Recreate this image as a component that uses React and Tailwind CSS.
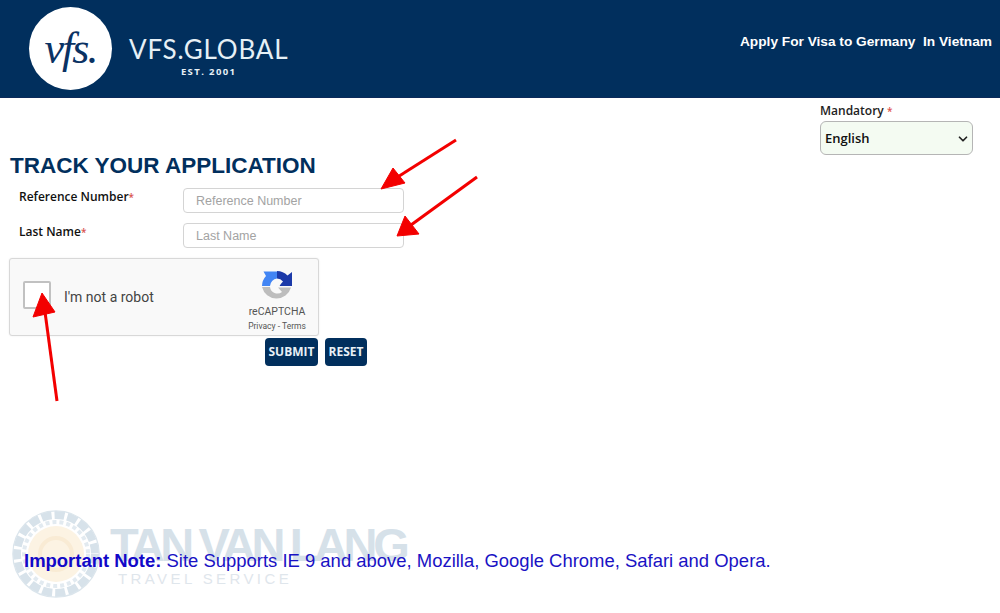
import React from "react";
import { ChevronDown } from "lucide-react";

const NAVY = "#012f5d";

// reCAPTCHA mark, three arrows round a white centre
const RecaptchaIcon = () => (
  <svg width="32" height="33" viewBox="0 0 32 33" className="block">
    <path d="M31 2 V16 H18 L22 11.5 A8.5 8.5 0 0 0 16 8.5 V1 A15 15 0 0 1 26.5 5.5 Z" fill="#1c3aa9" />
    <path d="M1 16 A15 15 0 0 1 5 6 L2.5 1.5 H16 V8.5 A8 8 0 0 0 9 16 Z" fill="#4285f4" />
    <path d="M1 17 H9 A7.5 7.5 0 0 0 21 22 L17 17.5 H30 A15 15 0 0 1 1 17 Z" fill="#bdbdbd" />
    <path d="M12 12 L17 10 L20 13 L18 17 L12 19 L10 15 Z" fill="#f9f9f9" />
  </svg>
);

const Arrows = () => (
  <svg width="1000" height="613" className="absolute left-0 top-0 pointer-events-none">
    <g fill="#f30000" stroke="#f30000">
      <line x1="456" y1="140" x2="396" y2="178" strokeWidth="3" />
      <polygon points="381,189 393,168 405,183" strokeWidth="1" />
      <line x1="477" y1="177" x2="411" y2="225" strokeWidth="3" />
      <polygon points="397,236 405,216 419,234" strokeWidth="1" />
      <line x1="57" y1="401" x2="45" y2="312" strokeWidth="3" />
      <polygon points="42,293 33,317 55,312" strokeWidth="1" />
    </g>
  </svg>
);

// faint agency stamp behind the note
const Watermark = () => (
  <div className="absolute left-[12px] top-[510px] flex items-start pointer-events-none">
    <svg width="88" height="88" viewBox="0 0 88 88" className="block">
      <circle cx="44" cy="44" r="39" fill="none" stroke="#d7e2ea" strokeWidth="8" strokeDasharray="10 3" />
      <circle cx="44" cy="44" r="32" fill="none" stroke="#e2eaf0" strokeWidth="4" strokeDasharray="4 3" />
      <circle cx="44" cy="44" r="43.2" fill="none" stroke="#dbe5ec" strokeWidth="1.2" />
      <circle cx="44" cy="44" r="28" fill="#fcf3e3" />
      <circle cx="44" cy="44" r="16" fill="none" stroke="#f9ebd4" strokeWidth="4" />
    </svg>
    <div className="ml-[10px] font-['Liberation_Sans',sans-serif]">
      <div className="mt-[10px] text-[47px] leading-[50px] font-bold tracking-[-4.4px] text-[#d6e1e9] whitespace-nowrap">
        TAN VAN LANG
      </div>
      <div className="ml-[8px] mt-[1px] text-[15px] leading-[16px] tracking-[3.4px] text-[#dfe6ec] whitespace-nowrap">
        TRAVEL SERVICE
      </div>
    </div>
  </div>
);

const Field = ({ label, placeholder }) => (
  <div className="flex items-start h-[35px]">
    <label className="w-[164px] pt-[1px] text-[12px] leading-[16px] font-semibold text-[#111] font-['Open_Sans',sans-serif]">
      {label}
      <span className="text-[10px] align-top text-[#d9534f]">*</span>
    </label>
    <input
      placeholder={placeholder}
      className="w-[221px] h-[25px] px-[12px] rounded-[4px] border border-[#d4d4d4] bg-white text-[12.5px] font-['Liberation_Sans',sans-serif] placeholder:text-[#a3a3a3] outline-none"
    />
  </div>
);

const App = () => {
  return (
    <div className="relative w-[1000px] h-[613px] overflow-hidden bg-white font-['Liberation_Sans',sans-serif]">
      <header className="flex justify-between h-[98px] border-b border-[#0c2a5a]" style={{ backgroundColor: NAVY }}>
        <div className="flex items-start pl-[29px] pt-[7px]">
          <div className="flex items-center justify-center w-[83px] h-[83px] rounded-full bg-white">
            <span className="text-[44px] leading-none italic text-[#0a3263] font-['Liberation_Serif',serif] tracking-[-2px]">
              vfs.
            </span>
          </div>
          <div className="ml-[17px] pt-[29px] flex flex-col items-center text-[#e6f0f6]">
            <span className="text-[26px] leading-[27px] tracking-[0.8px] font-['Lato',sans-serif] font-normal">
              VFS.GLOBAL
            </span>
            <span className="mt-[3px] text-[9.5px] leading-[12px] tracking-[1.4px] font-bold font-['Open_Sans',sans-serif]">
              EST. 2001
            </span>
          </div>
        </div>
        <div className="pr-[8px] pt-[33px] text-[13.7px] leading-[17px] font-bold text-white whitespace-pre">
          Apply For Visa to Germany  In Vietnam
        </div>
      </header>

      <div className="flex justify-end pr-[27px] pt-[5px]">
        <div className="w-[153px]">
          <div className="text-[12px] leading-[16px] font-semibold text-[#222] font-['Open_Sans',sans-serif]">
            Mandatory <span className="text-[10px] align-top text-[#e0524d]">*</span>
          </div>
          <div className="mt-[2px] flex items-center justify-between h-[34px] pt-[1px] pl-[4px] pr-[2px] rounded-[6px] border border-[#b5b5b5] bg-[#f4fbf2] text-[13px] font-semibold text-[#111] font-['Open_Sans',sans-serif]">
            English
            <ChevronDown size={14} strokeWidth={3} className="text-[#222]" />
          </div>
        </div>
      </div>

      <h1 className="pl-[10px] -mt-[1px] text-[22.5px] leading-[23px] font-bold text-[#012f5d] whitespace-nowrap">
        TRACK YOUR APPLICATION
      </h1>

      <div className="pl-[19px] pt-[11px]">
        <Field label="Reference Number" placeholder="Reference Number" />
        <Field label="Last Name" placeholder="Last Name" />
      </div>

      <div className="ml-[9px] flex items-start w-[310px] h-[78px] rounded-[3px] border border-[#d8d8d8] bg-[#f9f9f9] shadow-[0_0_2px_rgba(0,0,0,0.08)]">
        <div className="ml-[13px] mt-[22px] w-[28px] h-[28px] rounded-[2px] border-2 border-[#c1c1c1] bg-white" />
        <span className="ml-[13px] mt-[28px] text-[14px] leading-[20px] text-[#444] font-['Roboto',sans-serif]">I'm not a robot</span>
        <div className="ml-auto mr-[11px] flex flex-col items-center w-[60px] pt-[11px]">
          <RecaptchaIcon />
          <span className="mt-[3px] text-[10.5px] leading-[12px] text-[#555] font-['Roboto',sans-serif]">reCAPTCHA</span>
          <span className="mt-[3px] text-[8.5px] leading-[10px] text-[#555] font-['Roboto',sans-serif] whitespace-nowrap">
            Privacy - Terms
          </span>
        </div>
      </div>

      <div className="flex gap-[7px] pl-[265px] pt-[2px]">
        <button className="w-[53px] h-[28px] rounded-[4px] bg-[#012f5d] text-[12px] font-bold text-[#e8f0f6] font-['Open_Sans',sans-serif]">
          SUBMIT
        </button>
        <button className="w-[42px] h-[28px] rounded-[4px] bg-[#012f5d] text-[12px] font-bold text-[#e8f0f6] font-['Open_Sans',sans-serif]">
          RESET
        </button>
      </div>

      <Watermark />

      <p className="relative mt-[184px] pl-[24px] text-[18.47px] leading-[22px] text-[#1a12c4] whitespace-nowrap">
        <strong className="font-bold text-[#1208c8]">Important Note:</strong> Site Supports IE 9 and above, Mozilla, Google Chrome, Safari and Opera.
      </p>

      <Arrows />
    </div>
  );
};

export default App;
